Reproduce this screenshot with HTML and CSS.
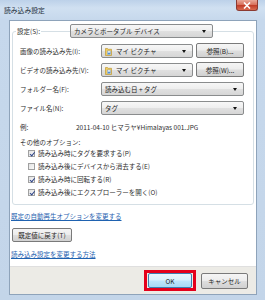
FILE: index.html
```html
<!DOCTYPE html>
<html lang="ja">
<head>
<meta charset="utf-8">
<title>読み込み設定</title>
<link rel="stylesheet" href="styles.css">
</head>
<body>
<div class="window">
  <div class="titlebar">
    <span class="title">読み込み設定</span>
    <span class="close"><svg width="8" height="7" viewBox="0 0 8 7"><path d="M1 0.5 L7 6.5 M7 0.5 L1 6.5" stroke="#fff" stroke-width="1.6"/></svg></span>
  </div>
  <div class="client">
    <div class="panel">
      <div class="group">
        <div class="group-head">
          <span class="group-label">設定(S):</span>
          <div class="select"><span class="sel-text">カメラとポータブル デバイス</span><i class="arrow"></i></div>
        </div>
        <div class="rows">
          <span class="lbl">画像の読み込み先(I):</span>
          <div class="ctl">
            <div class="select">
              <svg class="folder" width="7" height="9" viewBox="0 0 7 9"><path d="M0.5 1.5 H2.5 L3.2 2.3 H6.5 V8.5 H0.5 Z" fill="#f0cd62" stroke="#b58d25" stroke-width="0.6"/><rect x="2.3" y="4" width="3.4" height="3.6" fill="#fff" stroke="#6c8fb8" stroke-width="0.5"/><rect x="2.8" y="5.6" width="2.4" height="1.6" fill="#4f8fd6"/></svg>
              <span class="sel-text">マイ ピクチャ</span><i class="arrow"></i>
            </div>
            <span class="btn browse">参照(B)...</span>
          </div>
          <span class="lbl">ビデオの読み込み先(V):</span>
          <div class="ctl">
            <div class="select">
              <svg class="folder" width="7" height="9" viewBox="0 0 7 9"><path d="M0.5 1.5 H2.5 L3.2 2.3 H6.5 V8.5 H0.5 Z" fill="#f0cd62" stroke="#b58d25" stroke-width="0.6"/><rect x="2.3" y="4" width="3.4" height="3.6" fill="#fff" stroke="#6c8fb8" stroke-width="0.5"/><rect x="2.8" y="5.6" width="2.4" height="1.6" fill="#4f8fd6"/></svg>
              <span class="sel-text">マイ ピクチャ</span><i class="arrow"></i>
            </div>
            <span class="btn browse">参照(W)...</span>
          </div>
          <span class="lbl">フォルダー名(F):</span>
          <div class="select"><span class="sel-text">読み込む日 + タグ</span><i class="arrow"></i></div>
          <span class="lbl">ファイル名(N):</span>
          <div class="select"><span class="sel-text">タグ</span><i class="arrow"></i></div>
        </div>
        <div class="example"><span class="ex-lbl">例:</span><span>2011-04-10 ヒマラヤ¥Himalayas 001.JPG</span></div>
        <div class="opts-title">その他のオプション:</div>
        <ul class="checks">
          <li><span class="cb on"></span>読み込み時にタグを要求する(P)</li>
          <li><span class="cb"></span>読み込み後にデバイスから消去する(E)</li>
          <li><span class="cb on"></span>読み込み時に回転する(R)</li>
          <li><span class="cb on"></span>読み込み後にエクスプローラーを開く(O)</li>
        </ul>
      </div>
      <a class="link first-link">既定の自動再生オプションを変更する</a>
      <span class="btn reset">既定値に戻す(T)</span>
      <a class="link second-link">読み込み設定を変更する方法</a>
    </div>
    <div class="footer">
      <span class="highlight"><span class="btn ok">OK</span></span>
      <span class="btn cancel">キャンセル</span>
    </div>
  </div>
</div>
</body>
</html>
```

FILE: styles.css
```css
* { box-sizing: border-box; }
html, body { margin: 0; padding: 0; }
body {
  width: 265px;
  height: 300px;
  font-family: "Noto Sans CJK JP", "Noto Sans", sans-serif;
  font-size: 6.5px;
  color: #2e2e2e;
  overflow: hidden;
}
.window {
  width: 265px;
  height: 300px;
  display: flex;
  flex-direction: column;
  padding-bottom: 5px;
  background: linear-gradient(180deg, #bcd1e9 0px, #d0e0f1 8px, #c6d8ec 20px, #c3d5e9 100%);
}
.titlebar {
  height: 20px;
  display: flex;
  justify-content: space-between;
  align-items: flex-start;
  padding-left: 4px;
  padding-right: 7px;
}
.title {
  font-size: 6.8px;
  line-height: 20px;
  color: #25303c;
}
.close {
  width: 22px;
  height: 11px;
  display: flex;
  align-items: center;
  justify-content: center;
  border: 1px solid #8c3a31;
  border-top: none;
  border-radius: 0 0 3px 3px;
  background: linear-gradient(180deg, #e9a899 0%, #d9735f 45%, #c23e2a 55%, #d86a50 100%);
}
.client {
  flex: 1;
  margin: 0 8px 0 9px;
  border: 1px solid #8ea3ba;
  display: flex;
  flex-direction: column;
}
.panel {
  flex: 1;
  background: #fff;
  padding: 10px 2px 0 2px;
  display: flex;
  flex-direction: column;
  align-items: flex-start;
}
.group {
  align-self: stretch;
  border: 1px solid #d5dfe5;
  border-radius: 3px;
  height: 174px;
  padding: 0 9px 0 7px;
}
.group-head {
  display: grid;
  grid-template-columns: 54px 143px;
  align-items: center;
  height: 14px;
  margin-top: -8px;
  margin-left: -4px;
}
.group-label {
  justify-self: start;
  background: #fff;
  padding: 0 1px;
  line-height: 10px;
}
.select {
  height: 14px;
  display: flex;
  align-items: center;
  border: 1px solid #8a8c8d;
  border-radius: 2px;
  background: linear-gradient(180deg, #f7f7f7 0%, #eeeeee 50%, #e0e0e0 52%, #d6d6d6 100%);
  padding: 0 6px 0 3px;
  color: #1e1e1e;
}
.sel-text { flex: 1; white-space: nowrap; line-height: 10px; }
.arrow {
  width: 0;
  height: 0;
  border-left: 2.5px solid transparent;
  border-right: 2.5px solid transparent;
  border-top: 3px solid #111;
}
.folder { margin: 0 4px 0 0; flex: none; }
.rows {
  display: grid;
  grid-template-columns: 81px 1fr;
  row-gap: 5px;
  margin-top: 6px;
  align-items: center;
}
.lbl { line-height: 10px; white-space: nowrap; }
.ctl { display: flex; gap: 3px; }
.ctl .select { flex: 1; }
.btn {
  display: inline-flex;
  align-items: center;
  justify-content: center;
  border: 1px solid #7a7a7a;
  border-radius: 2px;
  background: linear-gradient(180deg, #f5f5f5 0%, #ececec 48%, #dedede 52%, #d1d1d1 100%);
  color: #1e1e1e;
  white-space: nowrap;
  line-height: 10px;
}
.browse { width: 48px; height: 15px; margin-top: -1px; }
.example {
  display: flex;
  margin-top: 7px;
  line-height: 10px;
}
.ex-lbl { width: 56px; }
.opts-title { margin-top: 5px; line-height: 10px; }
.checks {
  list-style: none;
  margin: 1px 0 0 0;
  padding: 0 0 0 8px;
  display: flex;
  flex-direction: column;
  gap: 3px;
}
.checks li {
  display: flex;
  align-items: center;
  gap: 3px;
  line-height: 10px;
  white-space: nowrap;
}
.cb {
  width: 7px;
  height: 7px;
  border: 1px solid #a0a0a0;
  background: linear-gradient(135deg, #e2e2e2, #fafafa);
  position: relative;
}
.cb.on::after {
  content: "";
  position: absolute;
  left: 1.5px;
  top: 0px;
  width: 1.8px;
  height: 3.5px;
  border-right: 1.2px solid #2e4488;
  border-bottom: 1.2px solid #2e4488;
  transform: rotate(40deg);
}
.link {
  color: #1f62b0;
  text-decoration: underline;
  line-height: 10px;
  white-space: nowrap;
  margin-left: -1px;
}
.first-link { margin-top: 6px; }
.reset { width: 60px; height: 14px; margin-top: 7px; }
.second-link { margin-top: 7px; }
.footer {
  height: 28px;
  display: flex;
  justify-content: flex-end;
  align-items: center;
  gap: 5px;
  padding-right: 8px;
  background: #ecebe6;
  border-top: 1px solid #dfdfdf;
}
.highlight {
  display: flex;
  border: 3px solid #e4001b;
  padding: 0 1px;
}
.ok {
  width: 44px;
  height: 15px;
  border-color: #3c7fb1;
  background: linear-gradient(180deg, #eaf6fd 0%, #d9f0fc 48%, #bee6fd 52%, #a7d9f5 100%);
}
.cancel { width: 47px; height: 16px; }
```
